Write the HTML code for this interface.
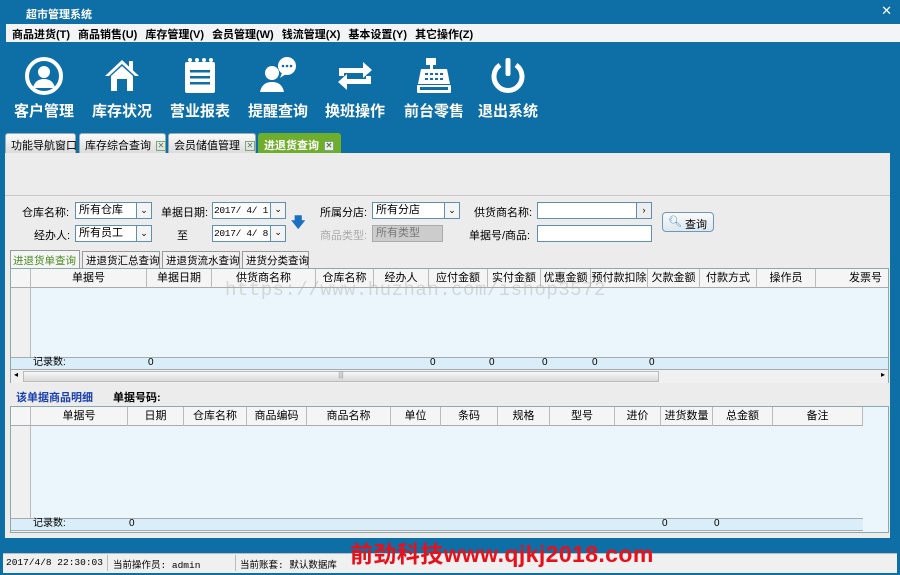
<!DOCTYPE html><html><head><meta charset="utf-8"><style>
*{margin:0;padding:0;box-sizing:border-box}
body{width:900px;height:575px;position:relative;background:#0e6ea6;font-family:"Liberation Sans","Noto Sans CJK SC",sans-serif;font-size:11px;overflow:hidden;color:#000;white-space:nowrap}
.a{position:absolute}
.menu span{margin-right:8px;font-size:11px;font-weight:bold}
.tb{position:absolute;top:56px;width:70px;text-align:center;color:#fff;font-size:15px;font-weight:bold}
.tb svg{display:block;margin:0 auto 4px}
.tab{position:absolute;top:133px;height:20px;background:linear-gradient(#fafafa,#dcdcdc);border:1px solid #9ab;border-bottom:none;font-size:11px;padding:3px 5px;border-radius:3px 3px 0 0}
.x{display:inline-block;width:10px;height:10px;border:1px solid #7a7;font-size:8px;line-height:8px;text-align:center;color:#575;margin-left:5px;vertical-align:middle}
.lbl{position:absolute;font-size:11px}
.in{position:absolute;height:17px;background:#fff;border:1px solid #5d8fb0;font-size:11px;padding:0 3px;line-height:15px;overflow:hidden}
.dd{position:absolute;right:0;top:0;width:15px;height:15px;border-left:1px solid #5d8fb0;background:#f4f4f4;font-size:9px;text-align:center;line-height:15px}
.grid{position:absolute;background:#eaf6fc;border:1px solid #8aa}
.c{position:absolute;top:0;border-right:1px solid #bbb;text-align:center;font-size:11px;overflow:hidden}
.h{background:#f5f5f5;height:19px;line-height:18px;border-bottom:1px solid #aaa}
.st{position:absolute;top:2px;font-size:9.5px;font-family:"Liberation Mono","Noto Sans CJK SC",monospace}
.r{position:absolute;font-size:10px;line-height:12px}
.dt{font-family:'Liberation Mono';font-size:9.5px;padding:0 1px;letter-spacing:-0.3px}
</style></head><body>
<div class="a" style="left:26px;top:6px;color:#fff;font-weight:bold;font-size:11px">超市管理系统</div>
<div class="a" style="right:8px;top:3px;color:#fff;font-size:13px">✕</div>
<div class="a menu" style="left:6px;top:24px;width:894px;height:18px;background:#f2f4f6;padding:2px 6px"><span>商品进货(T)</span><span>商品销售(U)</span><span>库存管理(V)</span><span>会员管理(W)</span><span>钱流管理(X)</span><span>基本设置(Y)</span><span>其它操作(Z)</span></div>

<div class="tb" style="left:9px"><svg width="40" height="40" viewBox="0 0 40 40"><circle cx="20" cy="20" r="17" fill="none" stroke="#fff" stroke-width="4"/><circle cx="20" cy="16" r="6" fill="#fff"/><path d="M9 32 Q11 23 20 23 Q29 23 31 32Z" fill="#fff"/></svg>客户管理</div>
<div class="tb" style="left:87px"><svg width="40" height="40" viewBox="0 0 40 40"><path d="M3 20 L20 4 L37 20 L33 20 L20 8 L7 20Z" fill="#fff"/><path d="M9 20 L20 10 L31 20 L31 35 L9 35Z" fill="#fff"/><rect x="15" y="23" width="10" height="12" fill="#0e6ea6"/><rect x="27" y="5" width="4" height="9" fill="#fff"/></svg>库存状况</div>
<div class="tb" style="left:165px"><svg width="40" height="40" viewBox="0 0 40 40"><rect x="5" y="6" width="30" height="31" rx="2" fill="#fff"/><g fill="#0e6ea6"><rect x="10" y="14" width="20" height="2.5"/><rect x="10" y="20" width="20" height="2.5"/><rect x="10" y="26" width="20" height="2.5"/></g><g fill="#fff"><circle cx="10" cy="4" r="2"/><circle cx="17" cy="4" r="2"/><circle cx="24" cy="4" r="2"/><circle cx="31" cy="4" r="2"/></g></svg>营业报表</div>
<div class="tb" style="left:243px"><svg width="40" height="40" viewBox="0 0 40 40"><circle cx="14" cy="17" r="7" fill="#fff"/><path d="M2 36 Q4 26 14 26 Q24 26 26 36Z" fill="#fff"/><circle cx="29" cy="10" r="9" fill="#fff"/><path d="M24 17 L22 22 L28 18Z" fill="#fff"/><g fill="#0e6ea6"><circle cx="25" cy="10" r="1.3"/><circle cx="29" cy="10" r="1.3"/><circle cx="33" cy="10" r="1.3"/></g></svg>提醒查询</div>
<div class="tb" style="left:320px"><svg width="40" height="40" viewBox="0 0 40 40"><path d="M4 20 V12 H28 V6 L37 14 L28 22 V17 H9 V20Z" fill="#fff"/><path d="M36 20 V28 H12 V34 L3 26 L12 18 V23 H31 V20Z" fill="#fff"/></svg>换班操作</div>
<div class="tb" style="left:399px"><svg width="40" height="40" viewBox="0 0 40 40"><rect x="12" y="2" width="10" height="7" fill="#fff"/><rect x="16" y="9" width="3" height="4" fill="#fff"/><path d="M7 13 H33 L36 28 H4Z" fill="#fff"/><rect x="3" y="29" width="34" height="8" rx="1" fill="#fff"/><g fill="#0e6ea6"><rect x="11" y="17" width="3" height="2"/><rect x="16" y="17" width="3" height="2"/><rect x="21" y="17" width="3" height="2"/><rect x="26" y="17" width="3" height="2"/><rect x="11" y="22" width="3" height="2"/><rect x="16" y="22" width="3" height="2"/><rect x="21" y="22" width="3" height="2"/><rect x="26" y="22" width="3" height="2"/><rect x="6" y="31" width="28" height="3"/></g></svg>前台零售</div>
<div class="tb" style="left:473px"><svg width="40" height="40" viewBox="0 0 40 40"><path d="M12 9 A14 14 0 1 0 28 9" fill="none" stroke="#fff" stroke-width="5"/><rect x="17.5" y="2" width="5" height="18" rx="2" fill="#fff"/></svg>退出系统</div>

<div class="tab" style="left:5px;width:71px">功能导航窗口</div>
<div class="tab" style="left:79px;width:87px">库存综合查询<span class="x">✕</span></div>
<div class="tab" style="left:168px;width:88px">会员储值管理<span class="x">✕</span></div>
<div class="tab" style="left:258px;width:83px;background:#6fae2c;border-color:#6fae2c;color:#fff;font-weight:bold">进退货查询<span class="x" style="background:#eee;color:#575">✕</span></div>

<div class="a" style="left:5px;top:153px;width:885px;height:385px;background:#ececec"></div>
<div class="a" style="left:5px;top:195px;width:885px;height:1px;background:#c8c8c8"></div>

<div class="lbl" style="left:22px;top:204px">仓库名称:</div>
<div class="in" style="left:75px;top:202px;width:77px">所有仓库<div class="dd">⌄</div></div>
<div class="lbl" style="left:161px;top:204px">单据日期:</div>
<div class="in dt" style="left:212px;top:202px;width:74px">2017/ 4/ 1<div class="dd">⌄</div></div>
<div class="lbl" style="left:34px;top:227px">经办人:</div>
<div class="in" style="left:75px;top:225px;width:77px">所有员工<div class="dd">⌄</div></div>
<div class="lbl" style="left:177px;top:227px">至</div>
<div class="in dt" style="left:212px;top:225px;width:74px">2017/ 4/ 8<div class="dd">⌄</div></div>
<div class="a" style="left:291px;top:212px;color:#1a6fc0;font-size:14px;font-weight:bold">🡇</div>
<div class="lbl" style="left:320px;top:204px">所属分店:</div>
<div class="in" style="left:372px;top:202px;width:88px">所有分店<div class="dd">⌄</div></div>
<div class="lbl" style="left:320px;top:227px;color:#aaa">商品类型:</div>
<div class="in" style="left:372px;top:225px;width:71px;background:#ccc;color:#777;border-color:#aaa">所有类型</div>
<div class="lbl" style="left:474px;top:204px">供货商名称:</div>
<div class="in" style="left:537px;top:202px;width:115px"><div class="dd" style="background:#eee">›</div></div>
<div class="lbl" style="left:469px;top:227px">单据号/商品:</div>
<div class="in" style="left:537px;top:225px;width:115px"></div>
<div class="a" style="left:662px;top:212px;width:52px;height:20px;border:1px solid #6a9ab8;border-radius:4px;background:linear-gradient(#fafafa,#dde8ef);padding:3px 0 0 22px;font-size:11px">查询<span class="a" style="left:5px;top:2px;color:#4b8fc0">🔍︎</span></div>

<div class="a" style="left:10px;top:250px;width:70px;height:18px;border:1px solid #999;border-bottom:none;background:#f5f5f5;color:#4a8a22;font-size:10.5px;padding:2px 2px">进退货单查询</div>
<div class="a" style="left:82px;top:251px;width:78px;height:17px;border:1px solid #999;border-bottom:none;background:#f0f0f0;font-size:10.5px;padding:1px 3px">进退货汇总查询</div>
<div class="a" style="left:162px;top:251px;width:78px;height:17px;border:1px solid #999;border-bottom:none;background:#f0f0f0;font-size:10.5px;padding:1px 3px">进退货流水查询</div>
<div class="a" style="left:242px;top:251px;width:67px;height:17px;border:1px solid #999;border-bottom:none;background:#f0f0f0;font-size:10.5px;padding:1px 3px">进货分类查询</div>

<div class="grid" style="left:10px;top:268px;width:879px;height:115px">
<div class="a h" style="left:0;top:0;width:877px"></div>
<div class="c h" style="left:0;width:20px"></div><div class="c h" style="left:20px;width:116px">单据号</div><div class="c h" style="left:136px;width:65px">单据日期</div><div class="c h" style="left:201px;width:104px">供货商名称</div><div class="c h" style="left:305px;width:58px">仓库名称</div><div class="c h" style="left:363px;width:55px">经办人</div><div class="c h" style="left:418px;width:59px">应付金额</div><div class="c h" style="left:477px;width:53px">实付金额</div><div class="c h" style="left:530px;width:50px">优惠金额</div><div class="c h" style="left:580px;width:57px">预付款扣除</div><div class="c h" style="left:637px;width:52px">欠款金额</div><div class="c h" style="left:689px;width:57px">付款方式</div><div class="c h" style="left:746px;width:59px">操作员</div><div class="c h" style="left:805px;width:72px;text-align:right;padding-right:6px;border-right:none">发票号</div>
<div class="a" style="left:0;top:19px;width:20px;height:69px;background:#f0f0f0;border-right:1px solid #bbb"></div>
<div class="a" style="left:0;top:88px;width:877px;height:13px;background:#d9eef8;border-top:1px solid #aaa;border-bottom:1px solid #aaa"></div>
<div class="r" style="left:22px;top:88px">记录数:</div>
<div class="r" style="left:137px;top:88px">0</div><div class="r" style="left:419px;top:88px">0</div><div class="r" style="left:478px;top:88px">0</div><div class="r" style="left:531px;top:88px">0</div><div class="r" style="left:581px;top:88px">0</div><div class="r" style="left:638px;top:88px">0</div>
<div class="a" style="left:0;top:101px;width:877px;height:13px;background:#f0f0f0"><div class="a" style="left:12px;top:1px;width:636px;height:11px;background:linear-gradient(#f8f8f8,#d8d8d8);border:1px solid #bbb;text-align:center;font-size:7px;color:#888">|||</div><span class="a" style="left:3px;top:0;font-size:8px">◂</span><span class="a" style="right:3px;top:0;font-size:8px">▸</span></div>
</div>
<div class="a" style="left:225px;top:279px;font-size:19px;color:rgba(170,170,170,.4);font-family:'Liberation Mono';letter-spacing:0.5px">https://www.huzhan.com/ishop3572</div>

<div class="a" style="left:16px;top:389px;color:#1a3fb0;font-weight:bold;font-size:11px">该单据商品明细</div>
<div class="a" style="left:113px;top:389px;font-weight:bold;font-size:11px">单据号码:</div>

<div class="grid" style="left:10px;top:406px;width:879px;height:127px">
<div class="c h" style="left:0;width:20px"></div><div class="c h" style="left:20px;width:97px">单据号</div><div class="c h" style="left:117px;width:56px">日期</div><div class="c h" style="left:173px;width:63px">仓库名称</div><div class="c h" style="left:236px;width:60px">商品编码</div><div class="c h" style="left:296px;width:84px">商品名称</div><div class="c h" style="left:380px;width:50px">单位</div><div class="c h" style="left:430px;width:57px">条码</div><div class="c h" style="left:487px;width:52px">规格</div><div class="c h" style="left:539px;width:65px">型号</div><div class="c h" style="left:604px;width:46px">进价</div><div class="c h" style="left:650px;width:52px">进货数量</div><div class="c h" style="left:702px;width:60px">总金额</div><div class="c h" style="left:762px;width:90px">备注</div>
<div class="a" style="left:0;top:19px;width:20px;height:92px;background:#f0f0f0;border-right:1px solid #bbb"></div>
<div class="a" style="left:0;top:111px;width:852px;height:13px;background:#d9eef8;border-top:1px solid #aaa;border-bottom:1px solid #aaa"></div>
<div class="r" style="left:22px;top:111px">记录数:</div>
<div class="r" style="left:118px;top:111px">0</div><div class="r" style="left:651px;top:111px">0</div><div class="r" style="left:703px;top:111px">0</div>
</div>

<div class="a" style="left:5px;top:538px;width:885px;height:15px;background:#0e6ea6"></div>
<div class="a" style="left:3px;top:553px;width:894px;height:20px;background:#f0f0f0;border-top:1px solid #bbb"></div>
<div class="st" style="left:6px;top:557px">2017/4/8 22:30:03</div>
<div class="a" style="left:107px;top:555px;width:1px;height:16px;background:#bbb"></div>
<div class="st" style="left:113px;top:557px">当前操作员: admin</div>
<div class="a" style="left:235px;top:555px;width:1px;height:16px;background:#bbb"></div>
<div class="st" style="left:240px;top:557px">当前账套: 默认数据库</div>
<div class="a" style="left:350px;top:535px;color:#e8101a;font-size:23px;font-weight:bold;letter-spacing:0.4px">前劲科技www.qjkj2018.com</div>
</body></html>
